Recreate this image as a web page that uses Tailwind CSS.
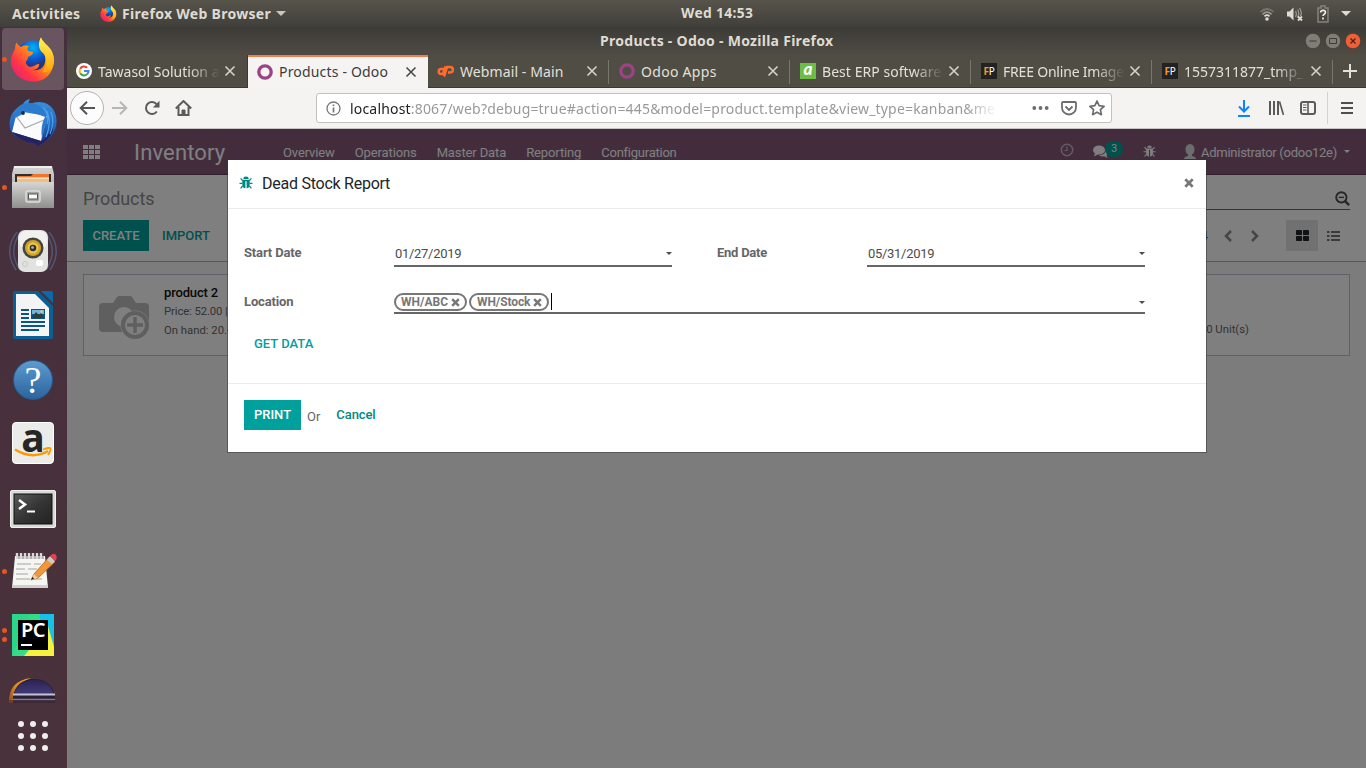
<!DOCTYPE html>
<html lang="en">
<head>
<meta charset="utf-8">
<title>Products - Odoo</title>
<script src="https://cdn.jsdelivr.net/npm/@tailwindcss/browser@4"></script>
</head>
<body class="w-[1366px] h-[768px] overflow-hidden flex flex-col font-['Noto_Sans',sans-serif] bg-[#452f3d]">
<svg class="absolute w-0 h-0">
  <defs>
    <linearGradient id="fx" x1="1" y1="0" x2="0" y2="1"><stop offset="0" stop-color="#fff44f"/><stop offset=".4" stop-color="#ff980e"/><stop offset=".7" stop-color="#ff3647"/><stop offset="1" stop-color="#e31587"/></linearGradient>
    <linearGradient id="fy" x1="0" y1="0" x2="0" y2="1"><stop offset="0" stop-color="#fff44f"/><stop offset="1" stop-color="#ffa20c"/></linearGradient>
    <radialGradient id="fb" cx=".5" cy=".2"><stop offset="0" stop-color="#00b3f4"/><stop offset=".6" stop-color="#0a5ad6"/><stop offset="1" stop-color="#20357c"/></radialGradient>
    <linearGradient id="tb" x1="0" y1="0" x2="0" y2="1"><stop offset="0" stop-color="#3a94e0"/><stop offset=".6" stop-color="#2264bd"/><stop offset="1" stop-color="#28246b"/></linearGradient>
    <linearGradient id="gr" x1="0" y1="0" x2="0" y2="1"><stop offset="0" stop-color="#d5d5d3"/><stop offset="1" stop-color="#8f8f8d"/></linearGradient>
    <linearGradient id="tm" x1="0" y1="0" x2="1" y2="1"><stop offset="0" stop-color="#5a5a5a"/><stop offset=".5" stop-color="#353535"/><stop offset="1" stop-color="#222"/></linearGradient>
    <linearGradient id="ec" x1="0" y1="0" x2="0" y2="1"><stop offset="0" stop-color="#2b2456"/><stop offset="1" stop-color="#453b78"/></linearGradient>
    <linearGradient id="eo" x1="0" y1="1" x2="1" y2="0"><stop offset="0" stop-color="#8a4a20"/><stop offset=".5" stop-color="#e08a20"/><stop offset="1" stop-color="#f7a833"/></linearGradient>
    <symbol id="firefox" viewBox="0 0 46 46">
      <circle cx="23" cy="23" r="18.500" fill="url(#fb)"/>
      <path d="M6.500 6.500 C8 9 9 10 11 11 C14 9 17 9.500 19 10 C17 12 17 14 18.500 15 L23 16 C23 19 20 20 18 21 C18 25 14 25 17 29 C21 34 26 27 29 28 C30 30 27 34 23 34 C33 36 38 26 34 17 C30 12 28 6 31 1.500 C33 7 38 9 41 14 C44 19 45 26 43 31 C40 41 32 46 23 45.500 C10 45 1 36 1 25 C1 20 3 16 5 13 C5 10 5.500 8 6.500 6.500Z" fill="url(#fx)"/>
      <path d="M31 1.500 C33 7 38 9 41 14 C44 19 45 26 42 32 C40 36 35 37 32 36 C38 30 37 21 33 17 C28 13 28 7 31 1.500Z" fill="url(#fy)"/>
    </symbol>
    <symbol id="bug" viewBox="0 0 14 14">
      <path d="M4.400 2.900 a2.600 2.300 0 0 1 5.200 0Z M3.300 3.800 h7.400 v4.700 c0 2.400-1 3.500-3.100 3.800 V5.300 h-1.200 v7 c-2.100-.3-3.100-1.400-3.100-3.800Z" fill="currentColor"/>
      <path d="M3.600 4.600 L1.600 2.400 M10.400 4.600 L12.400 2.400 M.5 7.300 h3 M10.500 7.300 h3 M3.600 10 L1.600 12.400 M10.400 10 L12.400 12.400" stroke="currentColor" stroke-width="1.200" fill="none"/>
    </symbol>
    <symbol id="x" viewBox="0 0 12 12"><path d="M1.500 1.500 L10.500 10.500 M10.500 1.500 L1.500 10.500" stroke="currentColor" stroke-width="1.600" fill="none"/></symbol>
    <symbol id="fx-x" viewBox="0 0 10 10"><path d="M1.300 1.300 L8.700 8.700 M8.700 1.300 L1.300 8.700" stroke="currentColor" stroke-width="2.700" fill="none"/></symbol>
    <symbol id="caret" viewBox="0 0 6 3"><path d="M0 0h6L3 3Z" fill="currentColor"/></symbol>
    <symbol id="ring" viewBox="0 0 16 16"><circle cx="8" cy="8" r="6.200" fill="none" stroke="#9c4386" stroke-width="3.300"/></symbol>
  </defs>
</svg>

<!-- GNOME top bar -->
<header class="h-[27px] shrink-0 flex items-center bg-linear-to-b from-[#57544b] to-[#403f3a] text-[#dfdbd2] font-bold text-[14px] relative">
  <span class="ml-[12px] w-[68px] text-[14px] tracking-[0.350px]">Activities</span>
  <svg class="ml-[20px] w-[17px] h-[17px]"><use href="#firefox"/></svg>
  <span class="ml-[5px] w-[149px] whitespace-nowrap text-[14px] tracking-[0.300px]">Firefox Web Browser</span>
  <svg class="ml-[5px] w-[10px] h-[5px] text-[#c9c6be]"><use href="#caret"/></svg>
  <span class="ml-[395px] w-[78px] text-[13.800px] tracking-[0.350px] whitespace-nowrap">Wed 14:53</span>
  <div class="ml-auto flex items-center pr-[15px]">
    <svg width="16" height="16" viewBox="0 0 16 16" fill="none"><path d="M1.500 6 Q8 0 14.500 6" stroke="#77746d" stroke-width="1.700"/><path d="M3.500 8.300 Q8 4 12.500 8.300" stroke="#99968e" stroke-width="1.700"/><path d="M5.500 10.300 Q8 8 10.500 10.300" stroke="#dfdbd2" stroke-width="1.700"/><circle cx="8" cy="13" r="1.800" fill="#dfdbd2"/></svg>
    <svg class="ml-[11px]" width="18" height="16" viewBox="0 0 18 16" fill="none"><path d="M1 5.500h2.500L7.500 1.500v13L3.500 10.500H1Z" fill="#dfdbd2"/><path d="M9.500 5 q1.700 3 0 6 M11.500 3.500 q2.500 4 0 8 M13.500 2 q3 5 1 8" stroke="#99968e" stroke-width="1.300"/><path d="M12 10.500 l4 4 M16 10.500 l-4 4" stroke="#dfdbd2" stroke-width="1.800"/></svg>
    <svg class="ml-[13px]" width="12" height="18" viewBox="0 0 12 18"><path d="M4 1h4v2h3v14H1V3h3Z" fill="none" stroke="#858279" stroke-width="1.500"/><path d="M3.700 7.500 q0-2.200 2.400-2.200 t2.300 2.200 q0 1-1.200 1.700 t-1.200 1.900 M6 12.500v2" stroke="#f0ede6" stroke-width="1.700" fill="none"/></svg>
    <svg class="ml-[12px] w-[10px] h-[5px] text-[#dfdbd2]"><use href="#caret"/></svg>
  </div>
</header>

<div class="flex flex-1 min-h-0">
  <!-- Dock -->
  <nav class="w-[67px] pr-[1px] shrink-0 flex flex-col bg-linear-to-b from-[#452f3d] to-[#49323b]">
    <div class="h-16 shrink-0 flex items-center"><div class="ml-[2px] w-[62px] h-[62px] rounded bg-[#68555f] flex items-center relative">
      <i class="absolute left-0 w-[5px] h-[5px] rounded-full bg-[#e95420]"></i>
      <svg class="ml-[8px] w-[46px] h-[46px]"><use href="#firefox"/></svg></div></div>
    <div class="h-16 shrink-0 flex items-center justify-center">
      <svg width="48" height="48" viewBox="0 0 48 48"><path d="M1 30Q-1 18 6 11Q11 6 14 5Q16 1 21 0Q19 3 20 5Q36-1 44 10Q50 20 46 31Q42 41 29 47L25 44Q18 44 12 40Q4 37 1 30Z" fill="url(#tb)"/><path d="M7 17L3 33L32 42L38 17L14 13Z" fill="#fbfbfb"/><path d="M7 17L16 29L35 21" fill="none" stroke="#a8a8a8" stroke-width="1.200"/><path d="M6 19Q7 9 14 5Q30 1 36 14Q40 20 36 27L33 40Q31 27 36 18L23 13Q17 10 12 16Z" fill="#2c7ccd"/><circle cx="14" cy="14" r="1.900" fill="#122b5a"/><path d="M3 33L32 42Q40 38 43 27Q47 36 29 47L25 44Q12 43 3 33Z" fill="#232363"/><path d="M38 12Q43 23 37 38M42 13Q46 23 41 35M34 8Q41 16 38 25" stroke="#4aa3ea" stroke-width="1.200" fill="none"/></svg>
    </div>
    <div class="h-16 shrink-0 flex items-center relative">
      <i class="absolute left-[2px] w-[5px] h-[5px] rounded-full bg-[#e95420]"></i>
      <svg class="mx-auto" width="44" height="46" viewBox="0 0 44 46"><path d="M3 2h38l2 8v34H1V10Z" fill="url(#gr)"/><path d="M3 2h38v2H3Z" fill="#efefed"/><path d="M4 10h36v9H4Z" fill="#302f2e"/><path d="M6 12 h14l2-2h16v8H6Z" fill="#ef762d"/><path d="M6 14h32v4H6Z" fill="#f3be7d"/><path d="M6 14h32" stroke="#fff"/><path d="M1 18h42v26H1Z" fill="url(#gr)"/><rect x="15" y="27" width="14" height="11" rx="2" fill="#a6a6a4" stroke="#dededc" stroke-width="1.500"/><rect x="17.500" y="30" width="9" height="5" fill="#fafafa" stroke="#555"/></svg>
    </div>
    <div class="h-16 shrink-0 flex items-center justify-center">
      <svg width="50" height="46" viewBox="0 0 50 46" fill="none"><path d="M9 4Q-5 22 8 42M13 4Q-1 22 12 42M41 4Q55 22 42 42M37 4Q51 22 38 42" stroke="#586784" stroke-opacity=".7" stroke-width="1.500"/><rect x="10" y="2" width="30" height="42" rx="7" fill="#e2e2e0"/><rect x="11" y="3" width="28" height="18" rx="7" fill="#f1f1ef"/><circle cx="25" cy="20" r="10.500" fill="#444"/><circle cx="25" cy="20" r="8" fill="#d0a32a"/><circle cx="25" cy="20" r="5.500" fill="#ecc646"/><circle cx="25" cy="20" r="3.300" fill="#333"/><circle cx="24.500" cy="19.500" r="1.300" fill="#bbb"/><rect x="28" y="32" width="7" height="6" rx="2" fill="#fff"/><circle cx="17" cy="36" r="2.500" stroke="#c7c7c7"/></svg>
    </div>
    <div class="h-16 shrink-0 flex items-center justify-center">
      <svg width="40" height="48" viewBox="0 0 40 48"><path d="M2 0h23l15 15v31q0 2-2 2H2q-2 0-2-2V2Q0 0 2 0Z" fill="#0a5f94"/><path d="M28 0h10q2 0 2 2v10Z" fill="#0a6ba8"/><path d="M3 3h19l14 14v28H3Z" fill="#f4f4f4"/><path d="M8 19h8M8 23h8M8 27h8M8 31h24M8 35h24M8 39h18" stroke="#0a5487" stroke-width="2"/><path d="M18 18h14v10H18Z" fill="#0a5487"/><path d="M19 19h12v4H19Z" fill="#6fb5df"/><path d="M19 27l4-6 3 3 2-2 3 5Z" fill="#333e32"/><circle cx="28.500" cy="20.500" r="1.200" fill="#f7ce46"/></svg>
    </div>
    <div class="h-16 shrink-0 flex items-center justify-center pt-[2px]">
      <div class="w-10 h-10 rounded-full bg-linear-to-b from-[#5c9bd0] to-[#2b649d] border border-[#245b90] text-white text-[38px] leading-[38px] text-center font-['Liberation_Serif',serif]">?</div>
    </div>
    <div class="h-16 shrink-0 flex items-center justify-center">
      <div class="w-[42px] h-[42px] rounded-sm bg-[#ebebea] border border-white relative text-center text-[#262626] font-bold text-[39px] leading-[27px] font-['Open_Sans',sans-serif]">a
        <svg class="absolute left-[1px] bottom-[4px]" width="38" height="12" viewBox="0 0 38 12"><path d="M1 2.500 Q18 13 34 4" fill="none" stroke="#ff9900" stroke-width="2.500"/><path d="M29 2.500 Q36 0 36.500 1.500 T34 8" fill="none" stroke="#ff9900" stroke-width="1.800"/></svg></div>
    </div>
    <div class="h-16 shrink-0 flex items-center justify-center pt-[3px]">
      <svg width="46" height="38" viewBox="0 0 46 38"><rect x=".5" y=".5" width="45" height="37" rx="1.500" fill="#d9d9d7" stroke="#f0f0ee"/><rect x="4" y="4" width="38" height="30" fill="url(#tm)" stroke="#111"/><path d="M9 10l6 4.500-6 4.500" fill="none" stroke="#fff" stroke-width="2.500"/><path d="M17 21.500h8" stroke="#fff" stroke-width="2"/></svg>
    </div>
    <div class="h-16 shrink-0 flex items-center relative">
      <i class="absolute left-[2px] w-[5px] h-[5px] rounded-full bg-[#e95420]"></i>
      <svg class="ml-[10px]" width="48" height="40" viewBox="0 0 48 40"><path d="M5 5h30l3 32H2Z" fill="#f5f5f2"/><path d="M2 34h36v3H2Z" fill="#cfcfcb"/><path d="M7 2v6M11 2v6M15 2v6M19 2v6M23 2v6M27 2v6M31 2v6" stroke="#d8d8d8" stroke-width="2.400"/><path d="M9 2v6M13 2v6M17 2v6M21 2v6M25 2v6M29 2v6M33 2v6" stroke="#555" stroke-width=".8"/><path d="M7 13h14M24 13h7M6 18h9M18 18h9M6 23h12M6 28h14M23 28h9" stroke="#a4a4a4" stroke-width="1"/><path d="M21 29l3-6L39 6l6 5-17 16Z" fill="#f0973a" stroke="#a35c1c" stroke-width=".7"/><path d="M37 9l3-4 5 5-3 3Z" fill="#ccc"/><path d="M40 5q4-4 6-1t-1 6Z" fill="#e4424d"/><path d="M21 29l3-6 4 4Z" fill="#e9cda3"/><path d="M21 29l1.500-3 1.500 1.500Z" fill="#111"/></svg>
    </div>
    <div class="h-16 shrink-0 flex items-center relative">
      <i class="absolute left-[2px] top-[25px] w-[5px] h-[5px] rounded-full bg-[#e95420]"></i>
      <i class="absolute left-[2px] top-[34px] w-[5px] h-[5px] rounded-full bg-[#e95420]"></i>
      <div class="mx-auto w-[42px] h-[42px] relative overflow-hidden bg-[#2bd68b]">
        <svg class="absolute inset-0" width="42" height="42" viewBox="0 0 42 42"><path d="M22 0h20v30Z" fill="#16c3e8"/><path d="M27 4L42 36v6H6L34 34Z" fill="#fcf84a"/><path d="M0 42L18 0H28L20 42Z" fill="#35dc88"/><path d="M12 42L36 12l6 21v9Z" fill="#f5f33f"/></svg>
        <div class="absolute left-[6px] top-[6px] w-[30px] h-[30px] bg-black text-white font-semibold text-[20px] leading-[20px] tracking-[-0.500px] text-center">PC<i class="absolute left-[3px] bottom-[4px] w-[11px] h-[2px] bg-white"></i></div>
      </div>
    </div>
    <div class="h-[37px] shrink-0 flex items-end justify-center overflow-hidden">
      <svg class="mb-0" width="50" height="27" viewBox="0 0 50 27"><path d="M1 26Q0 4 23 1Q6 8 5 26Z" fill="url(#eo)"/><path d="M5 19Q9 2 26 2T47 19V26H5Z" fill="#2a2035"/><path d="M6 18Q10 3 26 3T46 18Z" fill="url(#ec)"/><path d="M5 17.500h42" stroke="#c6c2d5" stroke-width="2"/><path d="M5 22.500h42" stroke="#817b8e" stroke-width="1.500"/><path d="M0 23h50v4H0Z" fill="#49323b" fill-opacity=".55"/></svg>
    </div>
    <div class="flex-1 grid place-items-center">
      <div class="grid grid-cols-3 gap-[6px]">
        <i class="w-[6px] h-[6px] rounded-full bg-[#eeeeec]"></i><i class="w-[6px] h-[6px] rounded-full bg-[#eeeeec]"></i><i class="w-[6px] h-[6px] rounded-full bg-[#eeeeec]"></i>
        <i class="w-[6px] h-[6px] rounded-full bg-[#eeeeec]"></i><i class="w-[6px] h-[6px] rounded-full bg-[#eeeeec]"></i><i class="w-[6px] h-[6px] rounded-full bg-[#eeeeec]"></i>
        <i class="w-[6px] h-[6px] rounded-full bg-[#eeeeec]"></i><i class="w-[6px] h-[6px] rounded-full bg-[#eeeeec]"></i><i class="w-[6px] h-[6px] rounded-full bg-[#eeeeec]"></i>
      </div>
    </div>
  </nav>

  <!-- Firefox window -->
  <main class="flex-1 min-w-0 flex flex-col">
    <div class="h-[28px] shrink-0 flex items-center bg-linear-to-b from-[#3c3b37] to-[#4f4c44] text-[#dfdbd2]">
      <span class="ml-[533px] w-[240px] pb-[2px] text-[14px] tracking-[0.280px] font-bold whitespace-nowrap">Products - Odoo - Mozilla Firefox</span>
      <div class="ml-auto mr-[5px] flex gap-[4px]">
        <svg width="16" height="16" viewBox="0 0 16 16"><circle cx="8" cy="8" r="7.700" fill="#7f7d76" stroke="#33322e" stroke-width=".6"/><path d="M4.500 8h7" stroke="#3c3b37"/></svg>
        <svg width="16" height="16" viewBox="0 0 16 16"><circle cx="8" cy="8" r="7.700" fill="#7f7d76" stroke="#33322e" stroke-width=".6"/><path d="M4.500 5.500h7v5h-7Z" fill="none" stroke="#3c3b37"/></svg>
        <svg width="16" height="16" viewBox="0 0 16 16"><circle cx="8" cy="8" r="7.700" fill="#ee6136" stroke="#33322e" stroke-width=".6"/><path d="M5.500 5.500l5 5M10.500 5.500l-5 5" stroke="#4a2418" stroke-width="1.300"/></svg>
      </div>
    </div>

    <div class="h-[33px] shrink-0 flex bg-[#504d45] text-[#e3e0d8] text-[14px] border-b border-[#3a3834]">
      <div class="w-[181px] shrink-0 flex items-center pl-[9px] border-r border-[#3a3834]">
        <svg width="16" height="16" viewBox="0 0 16 16" fill="none" stroke-width="2.100"><circle cx="8" cy="8" r="8" fill="#fff"/><path d="M11.200 4.700A4.500 4.500 0 0 0 4.200 5.700" stroke="#ea4335"/><path d="M4.200 5.700a4.500 4.500 0 0 0 0 4.600" stroke="#fbbc05"/><path d="M4.200 10.300a4.500 4.500 0 0 0 6.800 1" stroke="#34a853"/><path d="M11 11.300q1.500-1.300 1.500-3.300H8" stroke="#4285f4"/></svg>
        <span class="ml-[6px] w-[122px] overflow-hidden whitespace-nowrap mask-r-from-75% mask-r-to-100% text-[14px]">Tawasol Solution a</span>
        <svg class="ml-[4px] w-3 h-3 text-[#d5d2ca]"><use href="#x"/></svg>
      </div>
      <div class="w-[180px] h-[33px] -mb-px shrink-0 flex items-center pb-[2px] pl-[9px] bg-[#f5f4f2] border-t-2 border-[#f37b50] text-[#3c3c3c]">
        <svg class="w-4 h-4"><use href="#ring"/></svg>
        <span class="ml-[6px] w-[122px] overflow-hidden whitespace-nowrap tracking-[0.180px]">Products - Odoo</span>
        <svg class="ml-[4px] w-3 h-3 text-[#4a4a4a]"><use href="#x"/></svg>
      </div>
      <div class="w-[181px] shrink-0 flex items-center pl-[9px] relative">
        <svg width="17" height="12" viewBox="0 0 17 12" fill="none" stroke="#ff6c2c" stroke-width="2.500"><path d="M7.500 4H4.200a2.500 2.500 0 0 0 0 5H6L8.500 1.500"/><path d="M7 11.500 L10 2h3.200a2.700 2.700 0 0 1 0 5.500H11"/></svg>
        <span class="ml-[6px] w-[122px] overflow-hidden whitespace-nowrap tracking-[0.100px]">Webmail - Main</span>
        <svg class="ml-[4px] w-3 h-3 text-[#d5d2ca]"><use href="#x"/></svg>
        <i class="absolute right-0 top-[5px] w-px h-6 bg-[#79766e]"></i>
      </div>
      <div class="w-[181px] shrink-0 flex items-center pl-[10px] relative">
        <svg class="w-4 h-4"><use href="#ring"/></svg>
        <span class="ml-[6px] w-[122px] overflow-hidden whitespace-nowrap tracking-[0.300px]">Odoo Apps</span>
        <svg class="ml-[4px] w-3 h-3 text-[#d5d2ca]"><use href="#x"/></svg>
        <i class="absolute right-0 top-[5px] w-px h-6 bg-[#79766e]"></i>
      </div>
      <div class="w-[181px] shrink-0 flex items-center pl-[10px] relative">
        <div class="w-4 h-4 bg-[#6cbd45] text-white font-black italic text-[17px] leading-[12px] text-center font-['Lato',sans-serif]">a</div>
        <span class="ml-[6px] w-[122px] overflow-hidden whitespace-nowrap mask-r-from-75% mask-r-to-100% tracking-[0.050px]">Best ERP software</span>
        <svg class="ml-[4px] w-3 h-3 text-[#d5d2ca]"><use href="#x"/></svg>
        <i class="absolute right-0 top-[5px] w-px h-6 bg-[#79766e]"></i>
      </div>
      <div class="w-[181px] shrink-0 flex items-center pl-[10px] relative">
        <div class="w-4 h-4 bg-[#222] text-white text-[10px] leading-4 text-center tracking-[-0.300px]"><b class="text-[#f79a1e]">F</b>P</div>
        <span class="ml-[6px] w-[122px] overflow-hidden whitespace-nowrap mask-r-from-75% mask-r-to-100% tracking-[-0.200px]">FREE Online Image</span>
        <svg class="ml-[4px] w-3 h-3 text-[#d5d2ca]"><use href="#x"/></svg>
        <i class="absolute right-0 top-[5px] w-px h-6 bg-[#79766e]"></i>
      </div>
      <div class="w-[181px] shrink-0 flex items-center pl-[10px] relative">
        <div class="w-4 h-4 bg-[#222] text-white text-[10px] leading-4 text-center tracking-[-0.300px]"><b class="text-[#f79a1e]">F</b>P</div>
        <span class="ml-[6px] w-[122px] overflow-hidden whitespace-nowrap mask-r-from-75% mask-r-to-100%">1557311877_tmp_</span>
        <svg class="ml-[4px] w-3 h-3 text-[#d5d2ca]"><use href="#x"/></svg>
        <i class="absolute right-0 top-[5px] w-px h-6 bg-[#79766e]"></i>
      </div>
      <div class="flex-1 flex items-center justify-center"><svg width="14" height="14" viewBox="0 0 14 14"><path d="M7 0v14M0 7h14" stroke="#e3e0d8" stroke-width="2"/></svg></div>
    </div>

    <div class="h-[41px] shrink-0 flex items-center bg-[#f4f3f1] border-b border-[#c9c3c6] text-[#5b5b5b]">
      <div class="ml-[3px] w-[34px] h-[34px] rounded-full border border-[#b5b3b0] bg-[#fcfcfc] grid place-items-center">
        <svg width="16" height="14" viewBox="0 0 16 14" fill="none" stroke="#555" stroke-width="2"><path d="M16 7H1.500M8 .7L1.700 7 8 13.300"/></svg></div>
      <svg class="ml-[8px]" width="16" height="14" viewBox="0 0 16 14" fill="none" stroke="#b7b6b4" stroke-width="2"><path d="M0 7h14.500M8 .7L14.300 7 8 13.300"/></svg>
      <svg class="ml-[16px]" width="16" height="16" viewBox="0 0 16 16" fill="none" stroke="#5b5b5b" stroke-width="2"><path d="M12.800 11.500A6 6 0 1 1 12.500 4"/><path d="M15.500 .8v6.700H8.800Z" fill="#5b5b5b" stroke="none"/></svg>
      <svg class="ml-[15px]" width="17" height="16" viewBox="0 0 17 16" fill="none" stroke="#5b5b5b" stroke-width="2"><path d="M.8 8.500L8.500 1l7.700 7.500M3.500 7v8h10V7"/><path d="M7 15v-5h3v5" fill="#5b5b5b" stroke-width="1"/></svg>
      <div class="ml-[124px] w-[796px] h-[30px] rounded-[3px] border border-[#c3c1be] bg-white flex items-center">
        <svg class="ml-[9px]" width="15" height="15" viewBox="0 0 15 15" fill="none" stroke="#777" stroke-width="1.300"><circle cx="7.500" cy="7.500" r="6.500"/><path d="M7.500 6.500v5M7.500 3.500v1.600" stroke-width="1.700"/></svg>
        <span class="ml-[9px] w-[648px] overflow-hidden whitespace-nowrap text-[14px] tracking-[0.180px] text-[#999] mask-r-from-95% mask-r-to-100%"><span class="text-[#222]">localhost</span>:8067/web?debug=true#action=445&amp;model=product.template&amp;view_type=kanban&amp;me</span>
        <svg class="ml-[34px]" width="17" height="4" viewBox="0 0 17 4" fill="#6d6d6d"><circle cx="2.300" cy="2" r="1.900"/><circle cx="8.500" cy="2" r="1.900"/><circle cx="14.700" cy="2" r="1.900"/></svg>
        <svg class="ml-[12px]" width="16" height="15" viewBox="0 0 16 15" fill="none" stroke="#6d6d6d" stroke-width="1.800"><path d="M2 1h12q1 0 1 1v4.500a7 7 0 0 1-14 0V2q0-1 1-1Z"/><path d="M4.500 5.500L8 9l3.500-3.500"/></svg>
        <svg class="ml-[12px]" width="16" height="16" viewBox="0 0 16 16" fill="none" stroke="#6d6d6d" stroke-width="1.700" stroke-linejoin="round"><path d="M8 1l2.100 4.700 5 .6-3.700 3.400 1 5L8 12.200l-4.400 2.500 1-5L.9 6.300l5-.6Z"/></svg>
      </div>
      <svg class="ml-[126px]" width="12" height="17" viewBox="0 0 12 17" fill="none" stroke="#0a84ff" stroke-width="2"><path d="M6 0v11M1 6.500L6 11.500l5-5M0 16h12"/></svg>
      <svg class="ml-[19px]" width="15" height="14" viewBox="0 0 15 14" fill="none" stroke="#5b5b5b" stroke-width="2"><path d="M1 0v14M5 0v14M9 0v14" /><path d="M10.500 .5L14.500 14" stroke-width="1.700"/></svg>
      <svg class="ml-[16px]" width="16" height="14" viewBox="0 0 16 14" fill="none" stroke="#5b5b5b"><rect x="1" y="1" width="14" height="12" rx="2" stroke-width="2"/><path d="M8 1v12" stroke-width="1.600"/><path d="M3 4h3.500M3 6.500h3.500M3 9h3.500"/></svg>
      <i class="ml-[11px] w-px h-[32px] bg-[#d5d3d0]"></i>
      <svg class="ml-[13px]" width="12" height="12" viewBox="0 0 12 12" stroke="#4f4f4f" stroke-width="2"><path d="M0 1h12M0 6h12M0 11h12"/></svg>
    </div>

    <!-- Odoo web client -->
    <div class="flex-1 min-h-0 relative flex flex-col bg-[#f8f8f8] font-['Roboto',sans-serif] text-[13px]">
      <div class="h-[46px] shrink-0 flex items-center bg-[#875a7b] border-b border-[#5f3d56] text-white">
        <div class="ml-[16px] grid grid-cols-3 gap-[1px]">
          <i class="w-[5px] h-[4px] bg-white"></i><i class="w-[5px] h-[4px] bg-white"></i><i class="w-[5px] h-[4px] bg-white"></i>
          <i class="w-[5px] h-[4px] bg-white"></i><i class="w-[5px] h-[4px] bg-white"></i><i class="w-[5px] h-[4px] bg-white"></i>
          <i class="w-[5px] h-[4px] bg-white"></i><i class="w-[5px] h-[4px] bg-white"></i><i class="w-[5px] h-[4px] bg-white"></i>
        </div>
        <span class="ml-[34px] w-[92px] text-[22px] tracking-[0.150px] pt-[1px]">Inventory</span>
        <div class="ml-[57px] flex gap-5 pt-[2px] tracking-[-0.120px]"><span>Overview</span><span>Operations</span><span>Master Data</span><span>Reporting</span><span class="tracking-[-0.250px]">Configuration</span></div>
        <div class="ml-auto mr-[16px] flex items-center">
          <svg class="-mt-[4px]" width="14" height="14" viewBox="0 0 14 14" fill="none" stroke="#c9b4c3" stroke-width="1.500"><circle cx="7" cy="7" r="5.700"/><path d="M7 3.500V7.500H4.500" stroke-width="1.200"/></svg>
          <svg class="ml-[19px]" width="15" height="13" viewBox="0 0 15 13" fill="#fff"><ellipse cx="6" cy="5" rx="6" ry="4.500"/><path d="M2 8L1 11.500L5.500 9Z"/><path d="M12.700 4.500q2.300 1.500 2.300 3.300 0 1.700-1.500 2.700l1 2.500-3.500-1.700q-3.500.5-5-1.200 6.500.2 6.700-5.600Z"/></svg>
          <span class="ml-[-3px] -mt-[6px] w-[18px] h-[16px] rounded-full bg-[#00a09d] text-[11px] leading-4 text-center">3</span>
          <svg class="ml-[20px] w-[13px] h-[13px]"><use href="#bug"/></svg>
          <svg class="ml-[28px]" width="12" height="15" viewBox="0 0 12 15" fill="#d9d9d9"><ellipse cx="6" cy="5.500" rx="4.500" ry="5.500"/><path d="M4 10h4v2q4 .5 4 3H0q0-2.500 4-3Z"/></svg>
          <span class="ml-[5px] pt-[2px] tracking-[-0.270px]">Administrator (odoo12e)</span>
          <svg class="ml-[7px] w-[6px] h-[3px]"><use href="#caret"/></svg>
        </div>
      </div>

      <div class="h-[87px] shrink-0 bg-white border-b border-[#aab0b5] pl-[16px] pr-[16px]">
        <div class="h-[35px] flex">
          <span class="w-[560px] pt-[10px] text-[18px] leading-[28px] tracking-[-0.100px] text-[#8c8c8c]">Products</span>
          <div class="flex-1 flex justify-end items-end border-b border-[#666] pb-[3px]">
            <svg width="15" height="15" viewBox="0 0 16 16" fill="none" stroke="#4c4c4c" stroke-width="2"><circle cx="6.800" cy="6.800" r="5.500"/><path d="M11 11l4 4" stroke-width="2.600"/><path d="M4 6.800h5.600" stroke-width="1.500"/></svg>
          </div>
        </div>
        <div class="mt-[10px] h-[31px] flex items-center text-[#00a09d] font-medium">
          <span class="w-[66px] h-[31px] leading-[31px] bg-[#00a09d] text-white text-center">CREATE</span>
          <span class="ml-[13px]">IMPORT</span>
          <span class="ml-auto text-[#285f90] font-normal">4</span>
          <svg class="ml-[16px]" width="8" height="12" viewBox="0 0 8 12" fill="none" stroke="#8a8a8a" stroke-width="2.500"><path d="M7 1L2 6l5 5"/></svg>
          <svg class="ml-[19px]" width="8" height="12" viewBox="0 0 8 12" fill="none" stroke="#8a8a8a" stroke-width="2.500"><path d="M1 1l5 5-5 5"/></svg>
          <span class="ml-[27px] w-[32px] h-[31px] bg-[#e2e2e2] grid place-items-center"><svg width="13" height="11" viewBox="0 0 13 11" fill="#212529"><rect width="6" height="5" rx=".8"/><rect x="7" width="6" height="5" rx=".8"/><rect y="6" width="6" height="5" rx=".8"/><rect x="7" y="6" width="6" height="5" rx=".8"/></svg></span>
          <svg class="ml-[9px] mr-[10px]" width="13" height="10" viewBox="0 0 13 10" stroke="#777" stroke-width="2"><path d="M0 1h2.500M4 1h9M0 5h2.500M4 5h9M0 9h2.500M4 9h9"/></svg>
        </div>
      </div>

      <div class="mt-[12px] mx-[16px] flex gap-2 h-[82px] text-[11.300px] text-[#666]">
        <div class="w-[309px] bg-white border border-[#bcc3ca] flex">
          <svg class="ml-[15px] mt-[20px]" width="52" height="46" viewBox="0 0 52 46"><path d="M4 8h10l4-6q1-1 2-1h11q1 0 2 1l4 6h9q4 0 4 4v21q0 4-4 4H4q-4 0-4-4V12Q0 8 4 8Z" fill="#bebebe"/><circle cx="25" cy="22" r="10" fill="#fff"/><circle cx="36" cy="30" r="14.500" fill="#fff"/><circle cx="36" cy="30" r="12" fill="#fff" stroke="#bebebe" stroke-width="4"/><path d="M36 22v16M28 30h16" stroke="#bebebe" stroke-width="3.500"/></svg>
          <div class="ml-[13px] pt-[8px] leading-[19px] whitespace-nowrap"><b class="block text-[13px] leading-[19px] tracking-[-0.150px] font-medium text-[#111]">product 2</b><span class="tracking-[-0.100px]">Price: 52.00 |</span><br>On hand: 20.00</div>
        </div>
        <div class="flex-1 bg-white border border-[#bcc3ca] flex justify-end items-center pt-[31px] pr-[100px]">0 Unit(s)</div>
      </div>

      <div class="absolute inset-0 bg-black/50"></div>

      <!-- Report wizard -->
      <section class="absolute left-[161px] top-[31px] w-[978px] h-[292px] bg-white outline outline-[#333]/50 text-[#666] flex flex-col">
        <div class="h-[49px] shrink-0 flex items-center border-b border-[#e9ecef] pl-[11px] pr-[12px]">
          <svg class="w-[14px] h-[14px] -mt-[2px] text-[#00877f]"><use href="#bug"/></svg>
          <span class="ml-[9px] text-[16px] tracking-[-0.250px] text-[#212529]">Dead Stock Report</span>
          <svg class="ml-auto -mt-[3px] w-[10px] h-[10px] text-[#777]"><use href="#fx-x"/></svg>
        </div>
        <div class="h-[175px] shrink-0 border-b border-[#e9ecef] px-[16px]">
          <div class="mt-[31px] h-[27px] flex">
            <b class="w-[150px] leading-[26px] tracking-[-0.150px]">Start Date</b>
            <div class="w-[278px] flex items-center border-b-2 border-[#666] text-[#4c4c4c] pl-[1px]"><span class="tracking-[-0.300px] pt-[2px]">01/27/2019</span><svg class="ml-auto mt-[2px] w-[6px] h-[3px]"><use href="#caret"/></svg></div>
            <b class="ml-[45px] w-[150px] leading-[26px] tracking-[-0.250px]">End Date</b>
            <div class="w-[278px] flex items-center border-b-2 border-[#666] text-[#4c4c4c] pl-[1px]"><span class="tracking-[-0.300px] pt-[2px]">05/31/2019</span><svg class="ml-auto mt-[2px] w-[6px] h-[3px]"><use href="#caret"/></svg></div>
          </div>
          <div class="mt-[22px] h-[25px] flex">
            <b class="w-[150px] leading-[25px] tracking-[-0.150px]">Location</b>
            <div class="w-[751px] flex items-center border-b-2 border-[#666] gap-[2px] text-[12px] text-[#777] font-bold">
              <span class="w-[73px] h-[18px] mt-[3px] rounded-full border-2 border-[#777] flex items-center justify-between pl-[5px] pr-[5px]">WH/ABC<svg class="w-[9px] h-[9px]"><use href="#fx-x"/></svg></span>
              <span class="w-[80px] h-[18px] mt-[3px] rounded-full border-2 border-[#777] flex items-center justify-between pl-[6px] pr-[5px] tracking-[-0.100px]">WH/Stock<svg class="w-[9px] h-[9px]"><use href="#fx-x"/></svg></span>
              <i class="mt-[1px] w-px h-[17px] bg-black"></i>
              <svg class="ml-auto mt-[3px] w-[6px] h-[3px] text-[#4c4c4c]"><use href="#caret"/></svg>
            </div>
          </div>
          <div class="mt-[20px] ml-[10px] font-medium text-[#00a09d] leading-[20px]">GET DATA</div>
        </div>
        <div class="flex pl-[16px] pt-[16px] leading-[30px]">
          <span class="w-[57px] h-[30px] bg-[#00a09d] text-white font-medium text-center">PRINT</span>
          <span class="ml-[6px] pt-[2px]">Or</span>
          <span class="ml-[16px] font-medium tracking-[-0.100px] text-[#008784]">Cancel</span>
        </div>
      </section>
    </div>
  </main>
</div>
</body>
</html>
